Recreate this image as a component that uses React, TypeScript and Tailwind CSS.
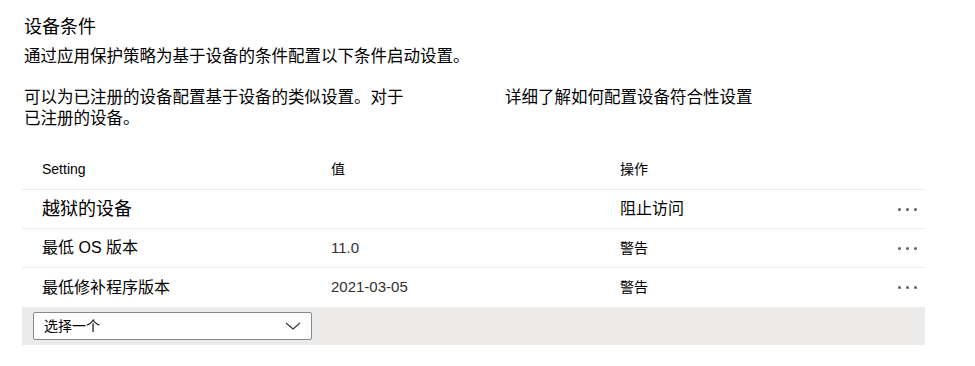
import React from "react";

const FONT = '"Liberation Sans", "Noto Sans CJK SC", sans-serif';

function Dots() {
  return (
    <div className="flex items-center gap-[5px] pr-[8px]">
      <span className="block w-[3px] h-[3px] rounded-full bg-[#605e5c]" />
      <span className="block w-[3px] h-[3px] rounded-full bg-[#605e5c]" />
      <span className="block w-[3px] h-[3px] rounded-full bg-[#605e5c]" />
    </div>
  );
}

type Row = { setting: string; value: string; action: string; big?: boolean };

const rows: Row[] = [
  { setting: "越狱的设备", value: "", action: "阻止访问", big: true },
  { setting: "最低 OS 版本", value: "11.0", action: "警告" },
  { setting: "最低修补程序版本", value: "2021-03-05", action: "警告" },
];

export default function App() {
  return (
    <div
      className="w-[975px] h-[366px] bg-white text-black px-[22px] overflow-hidden"
      style={{ fontFamily: FONT }}
    >
      <div className="pl-[2px] pt-[16px] text-[18px] leading-[22px]">设备条件</div>
      <div className="pl-[2px] mt-[7px] text-[16.5px] leading-[22px]">
        通过应用保护策略为基于设备的条件配置以下条件启动设置。
      </div>
      <div className="pl-[2px] mt-[20px] flex text-[16.5px] leading-[21px]">
        <div className="w-[385px]">
          可以为已注册的设备配置基于设备的类似设置。对于已注册的设备。
        </div>
        <div className="ml-[96px]">详细了解如何配置设备符合性设置</div>
      </div>

      <div className="mt-[21px] w-[903px]">
        <div className="flex items-center h-[40px] border-b border-[#edebe9] text-[14px]">
          <div className="w-[309px] pl-[20px]">Setting</div>
          <div className="w-[289px]">值</div>
          <div className="flex-1">操作</div>
        </div>
        {rows.map((r, i) => (
          <div
            key={i}
            className={`flex items-center h-[39px] ${i < rows.length - 1 ? "border-b border-[#edebe9]" : ""}`}
          >
            <div className={`w-[309px] pl-[20px] ${r.big ? "text-[18px]" : "text-[16px]"}`}>
              {r.setting}
            </div>
            <div className="w-[289px] text-[15px] text-[#323130]">{r.value}</div>
            <div className={`flex-1 ${r.big ? "text-[16px]" : "text-[14px]"}`}>{r.action}</div>
            <Dots />
          </div>
        ))}
        <div className="h-[38px] bg-[#edebe9] flex items-center pl-[11px]">
          <div className="w-[279px] h-[28px] bg-white border border-[#8a8886] rounded-[2px] flex items-center justify-between pl-[10px] pr-[10px] text-[14px]">
            <span>选择一个</span>
            <svg width="16" height="8" viewBox="0 0 16 8" fill="none">
              <path d="M1 1 L8 7 L15 1" stroke="#323130" strokeWidth="1.1" />
            </svg>
          </div>
        </div>
      </div>
    </div>
  );
}
